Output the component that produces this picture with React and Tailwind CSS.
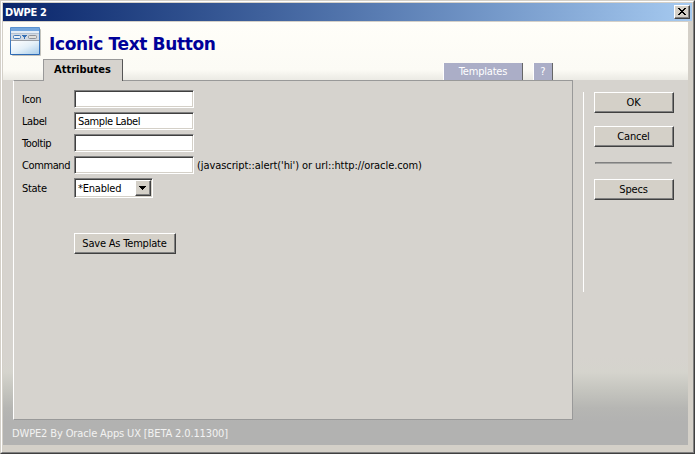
import React from "react";

const raised =
  "border border-t-white border-l-white border-r-[#404040] border-b-[#404040] bg-[#d4d0c8] shadow-[inset_-1px_-1px_0_#808080]";
const sunken =
  "border border-t-[#808080] border-l-[#808080] border-r-white border-b-white bg-white shadow-[inset_1px_1px_0_#404040,inset_-1px_-1px_0_#d4d0c8]";

function Button({ children, className = "" }) {
  return (
    <button className={`flex h-[21px] shrink-0 items-center justify-center whitespace-nowrap pr-px tracking-[-0.2px] ${raised} ${className}`}>
      {children}
    </button>
  );
}

function Field({ label, value = "", hint }) {
  return (
    <div className="flex h-[18px] items-center">
      <label className="w-[52px] shrink-0 whitespace-nowrap pt-[2px] tracking-[-0.4px]">{label}</label>
      <input
        className={`h-[18px] w-[120px] shrink-0 pl-[3px] pr-1 pt-px tracking-[-0.4px] outline-none ${sunken}`}
        defaultValue={value}
        aria-label={label}
      />
      {hint && <span className="ml-[3px] whitespace-nowrap pt-[2px] tracking-[-0.08px]">{hint}</span>}
    </div>
  );
}

function WindowIcon() {
  return (
    <svg width="32" height="31" viewBox="0 0 32 31" className="shrink-0">
      <defs>
        <linearGradient id="paneFill" x1="0" y1="0" x2="1" y2="1">
          <stop offset="0" stopColor="#ffffff" />
          <stop offset="0.5" stopColor="#e4f0f8" />
          <stop offset="1" stopColor="#a9cdea" />
        </linearGradient>
        <linearGradient id="edgeFill" x1="0" y1="0" x2="0" y2="1">
          <stop offset="0" stopColor="#5c93d0" />
          <stop offset="1" stopColor="#2c69b4" />
        </linearGradient>
      </defs>
      <rect x="2" y="2" width="29" height="27" rx="1" fill="#aaa9a3" opacity="0.7" />
      <rect x="0" y="0" width="30" height="28" rx="1" fill="url(#edgeFill)" />
      <rect x="1" y="1" width="28" height="3" fill="#74a7de" />
      <rect x="1" y="4" width="28" height="2" fill="#e4edf6" />
      <rect x="1" y="6" width="28" height="1" fill="#b5c3d3" />
      <rect x="1" y="7" width="28" height="6" fill="#d3dae3" />
      <rect x="1" y="13" width="28" height="1" fill="#9b9fa5" />
      <rect x="1" y="14" width="28" height="13" fill="url(#paneFill)" />
      <rect x="3.500" y="8.500" width="7" height="3" rx="1" fill="#eaf1f8" stroke="#3d76b7" />
      <path d="M12 8h5v1h-1v1h-1v2h-1v-2h-1v-1h-1z" fill="#346fb4" />
      <rect x="18.500" y="8.500" width="8" height="3" rx="1" fill="#e1dfda" stroke="#8e9299" />
    </svg>
  );
}

export default function App() {
  return (
    <div className="flex h-[454px] w-[695px] flex-col overflow-hidden border border-t-[#d4d0c8] border-l-[#d4d0c8] border-r-[#404040] border-b-[#404040] bg-[#d4d0c8] font-['DejaVu_Sans_Condensed','DejaVu_Sans',sans-serif] text-[11px] leading-[14px] text-black">
      <div className="flex min-h-0 flex-1 flex-col border border-t-white border-l-white border-r-[#808080] border-b-[#808080] pl-px pt-px">
        <header className="flex h-[18px] w-[689px] shrink-0 items-center justify-between bg-linear-to-r from-[#0a246a] to-[#a6caf0] pl-[2px] pr-[2px]">
          <span className="pt-px font-bold tracking-[-0.3px] text-white">DWPE 2</span>
          <button aria-label="Close" className={`flex h-[14px] w-4 items-center justify-center ${raised}`}>
            <svg width="8" height="7" viewBox="0 0 8 7" shapeRendering="crispEdges" className="-mt-px -ml-px">
              <path
                d="M0 0h2v1h1v1h2v-1h1v-1h2v1h-1v1h-1v1h-1v1h1v1h1v1h1v1h-2v-1h-1v-1h-2v1h-1v1h-2v-1h1v-1h1v-1h1v-1h-1v-1h-1v-1h-1z"
                fill="#000"
              />
            </svg>
          </button>
        </header>

        <div className="mt-px flex h-[423px] w-[685px] shrink-0 flex-col bg-[linear-gradient(to_bottom,#d6d3ce_335px,#d5d4cd_350px,#c5c5bf_368px,#b6b6b3_386px,#b2b2b1_400px)]">
          <div className="flex h-[58px] shrink-0 flex-col bg-linear-to-b from-[#fffef9] via-[#fcfbf5] via-[82%] to-[#ebeae4]">
            <div className="flex h-[37px] shrink-0 items-start pl-[7px] pt-[5px]">
              <WindowIcon />
              <h1 className="ml-[7px] mt-[6px] whitespace-nowrap font-['DejaVu_Sans',sans-serif] text-[17px] font-bold leading-[22px] tracking-[-0.36px] text-[#000099]">
                Iconic Text Button
              </h1>
            </div>
            <nav className="flex h-[21px] shrink-0 items-end pl-[40px]">
              <div className="z-10 -mb-px flex h-[22px] w-20 items-center justify-center border border-b-0 border-l-[#999] border-t-[#999] border-r-[#555] bg-[#d6d3ce] pb-px pr-px font-bold">
                Attributes
              </div>
              <div className="ml-[320px] flex h-[17px] w-20 items-center justify-center border-l border-r border-l-white border-r-[#666] bg-[#abaec7] tracking-[-0.2px] text-white">
                Templates
              </div>
              <div className="ml-[10px] flex h-[17px] w-5 items-center justify-center border-l border-r border-l-white border-r-[#666] bg-[#abaec7] text-white">
                ?
              </div>
            </nav>
          </div>

          <div className="flex h-[340px] shrink-0">
            <main className="ml-[10px] flex w-[560px] shrink-0 flex-col border border-t-[#999] border-l-white border-r-[#999] border-b-[#999] bg-[#d6d3ce] pl-[8px] pt-[9px]">
              <div className="flex flex-col gap-1">
                <Field label="Icon" />
                <Field label="Label" value="Sample Label" />
                <Field label="Tooltip" />
                <Field label="Command" hint="(javascript::alert('hi') or url::http://oracle.com)" />
                <div className="flex h-5 items-center">
                  <span className="w-[52px] pt-[2px] tracking-[-0.3px]">State</span>
                  <div className={`flex h-5 w-[79px] items-center justify-between p-px pl-[3px] ${sunken}`}>
                    <span className="pt-[2px] tracking-[-0.2px]">*Enabled</span>
                    <span className={`flex h-4 w-4 items-center justify-center ${raised}`}>
                      <svg width="7" height="4" viewBox="0 0 7 4" shapeRendering="crispEdges" className="-ml-px">
                        <path d="M0 0h7v1h-1v1h-1v1h-1v1h-1v-1h-1v-1h-1v-1h-1z" />
                      </svg>
                    </span>
                  </div>
                </div>
              </div>
              <Button className="ml-[52px] mt-[35px] w-[102px]">Save As Template</Button>
            </main>

            <aside className="ml-[10px] mt-3 flex h-[200px] flex-col border-l border-white pl-[10px]">
              <Button className="w-20">OK</Button>
              <Button className="mt-[13px] w-20">Cancel</Button>
              <div className="ml-px mt-[15px] h-[2px] w-[77px] border border-t-[#808080] border-l-[#808080] border-r-[#b5b3ae] border-b-[#a5a5a3]" />
              <Button className="mt-[15px] w-20">Specs</Button>
            </aside>
          </div>

          <footer className="flex h-[25px] shrink-0 items-center pl-[9px] pt-[2px] tracking-[-0.13px] text-[#f2f2f2]">
            DWPE2 By Oracle Apps UX [BETA 2.0.11300]
          </footer>
        </div>
      </div>
    </div>
  );
}
